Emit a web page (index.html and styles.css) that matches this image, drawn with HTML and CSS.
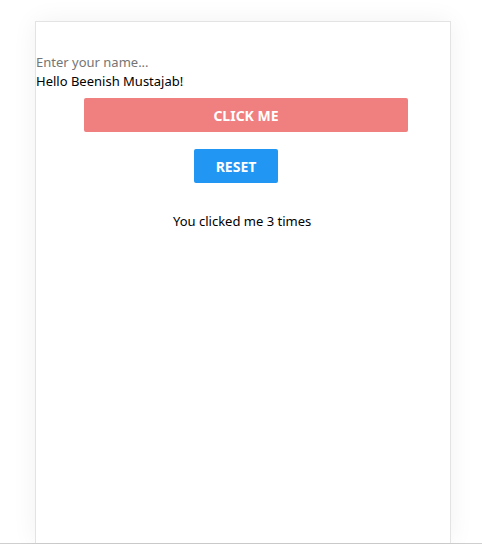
FILE: index.html
```html
<!DOCTYPE html>
<html>
<head>
<meta charset="utf-8">
<link rel="stylesheet" href="styles.css">
</head>
<body>
<div class="page">
  <div class="card">
    <input class="name" type="text" placeholder="Enter your name...">
    <div class="greet">Hello Beenish Mustajab!</div>
    <button class="btn click">CLICK ME</button>
    <button class="btn reset">RESET</button>
    <p class="count">You clicked me 3 times</p>
  </div>
</div>
<div class="rule"></div>
</body>
</html>
```
FILE: styles.css
```css
html, body {
  margin: 0;
  padding: 0;
  background: #fff;
  overflow: hidden;
}
body {
  font-family: "Noto Sans", "Open Sans", sans-serif;
  font-size: 13px;
  color: #000;
}
.page {
  height: 543px;
  padding: 21px 0 0 35px;
  box-sizing: border-box;
  display: flex;
}
.card {
  width: 416px;
  box-sizing: border-box;
  border: 1px solid #e3e3e3;
  border-bottom: none;
  box-shadow: 0 0 24px rgba(0, 0, 0, 0.06);
  display: flex;
  flex-direction: column;
  align-items: flex-start;
  padding-top: 30px;
}
.name {
  border: none;
  outline: none;
  padding: 0;
  margin: 0;
  font: inherit;
  height: 20px;
  width: 200px;
  color: #000;
  background: transparent;
}
.name::placeholder {
  color: #757575;
}
.greet {
  line-height: 19px;
}
.btn {
  border: none;
  border-radius: 2px;
  color: #fff;
  font-family: inherit;
  font-weight: 700;
  font-size: 14px;
  height: 34px;
  cursor: pointer;
}
.click {
  margin: 7px 0 0 48px;
  width: 324px;
  background: #f08080;
}
.reset {
  margin: 17px 0 0 158px;
  width: 84px;
  background: #2196f3;
}
.count {
  margin: 28px 0 0 137px;
  line-height: 20px;
}
.rule {
  height: 1px;
  background: #cfcfcf;
}
```
